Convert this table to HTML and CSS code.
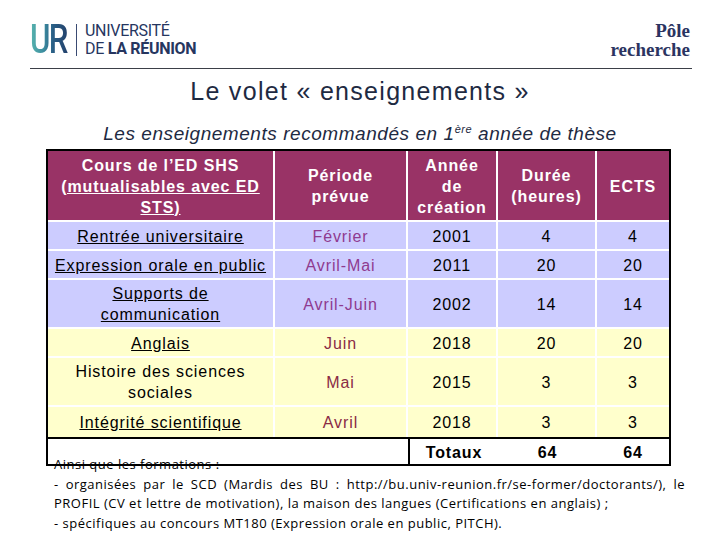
FILE: index.html
```html
<!DOCTYPE html>
<html lang="fr">
<head>
<meta charset="utf-8">
<title>Le volet « enseignements »</title>
<link rel="stylesheet" href="styles.css">
</head>
<body>
<header class="top">
  <div class="brand">
    <span class="urbox"><span class="ur">UR</span></span>
    <span class="sep"></span>
    <div class="uname">
      <div class="l1">UNIVERSITÉ</div>
      <div class="l2">DE <b>LA RÉUNION</b></div>
    </div>
  </div>
  <div class="pole">Pôle<br>recherche</div>
</header>
<div class="rule"></div>
<h1 class="title">Le volet « enseignements »</h1>
<h2 class="subtitle">Les enseignements recommandés en 1<sup>ère</sup> année de thèse</h2>
<div class="tablebox">
<table class="grid">
<colgroup><col class="c1"><col class="c2"><col class="c3"><col class="c4"><col class="c5"></colgroup>
<thead>
<tr class="head">
<th>Cours de l’ED SHS <u>(mutualisables avec ED STS)</u></th>
<th>Période<br>prévue</th>
<th>Année<br>de<br>création</th>
<th>Durée<br>(heures)</th>
<th>ECTS</th>
</tr>
</thead>
<tbody>
<tr class="blue single"><td><u>Rentrée universitaire</u></td><td class="per">Février</td><td>2001</td><td>4</td><td>4</td></tr>
<tr class="blue single"><td><u>Expression orale en public</u></td><td class="per">Avril-Mai</td><td>2011</td><td>20</td><td>20</td></tr>
<tr class="blue double"><td><u>Supports de<br>communication</u></td><td class="per">Avril-Juin</td><td>2002</td><td>14</td><td>14</td></tr>
<tr class="yellow single"><td><u>Anglais</u></td><td class="per">Juin</td><td>2018</td><td>20</td><td>20</td></tr>
<tr class="yellow double"><td>Histoire des sciences<br>sociales</td><td class="per">Mai</td><td>2015</td><td>3</td><td>3</td></tr>
<tr class="yellow last"><td><u>Intégrité scientifique</u></td><td class="per">Avril</td><td>2018</td><td>3</td><td>3</td></tr>
<tr class="tot"><td colspan="2"></td><td class="t3">Totaux</td><td>64</td><td>64</td></tr>
</tbody>
</table>
</div>
<div class="notes">
  <div class="nl">Ainsi que les formations :</div>
  <div class="nl just">- organisées par le SCD (Mardis des BU : http://bu.univ-reunion.fr/se-former/doctorants/), le</div>
  <div class="nl">PROFIL (CV et lettre de motivation), la maison des langues (Certifications en anglais) ;</div>
  <div class="nl">- spécifiques au concours MT180 (Expression orale en public, PITCH).</div>
</div>
</body>
</html>
```

FILE: styles.css
```css
html, body {
  margin: 0;
  padding: 0;
  background: #ffffff;
}
body {
  width: 720px;
  height: 540px;
  overflow: hidden;
  font-family: "Liberation Sans", Arial, sans-serif;
  color: #000;
}
.top {
  display: flex;
  justify-content: space-between;
  align-items: flex-start;
  height: 48px;
  padding: 20px 30px 0 30px;
}
.brand {
  display: flex;
  align-items: center;
  margin-top: 2px;
}
.urbox {
  display: inline-block;
  width: 40px;
  height: 34px;
  overflow: visible;
}
.ur {
  display: inline-block;
  font-family: Roboto, "Liberation Sans", sans-serif;
  font-weight: 500;
  font-size: 40px;
  line-height: 34px;
  letter-spacing: -2px;
  background: linear-gradient(90deg, #58b5ae 0%, #3d8ea0 35%, #2a5f86 60%, #23406b 100%);
  -webkit-background-clip: text;
  background-clip: text;
  color: transparent;
  padding-right: 2px;
  transform: scaleX(0.78);
  transform-origin: left center;
}
.sep {
  width: 1px;
  height: 32px;
  background: #3a4a72;
  margin: 0 8px 0 6px;
}
.uname {
  font-family: Roboto, "Liberation Sans", sans-serif;
  color: #26365f;
  font-size: 16px;
  line-height: 18px;
  letter-spacing: -0.3px;
}
.uname .l1 { font-weight: 400; }
.uname b { font-weight: 700; }
.pole {
  font-family: "Liberation Serif", "Times New Roman", serif;
  font-weight: 700;
  font-size: 19px;
  line-height: 19px;
  color: #2b3461;
  text-align: right;
  margin-top: 1px;
}
.rule {
  height: 1px;
  background: #3b3f48;
  margin: 0 28px 0 30px;
}
.title {
  margin: 8px 0 0 0;
  font-weight: 400;
  font-size: 25px;
  line-height: 29px;
  letter-spacing: 1.3px;
  text-align: center;
  color: #1e2a42;
}
.subtitle {
  margin: 17px 0 0 0;
  font-weight: 400;
  font-style: italic;
  font-size: 19px;
  line-height: 22px;
  letter-spacing: 0.55px;
  text-align: center;
  color: #1e2a42;
}
.subtitle sup {
  font-size: 11px;
  line-height: 0;
  vertical-align: 7px;
}
.tablebox {
  width: 621px;
  margin: 4px 0 0 46px;
  border: 2px solid #000;
}
.grid {
  width: 621px;
  table-layout: fixed;
  border-collapse: separate;
  border-spacing: 0;
  font-size: 16px;
  line-height: 21px;
  letter-spacing: 0.9px;
}
.c1 { width: 227px; }
.c2 { width: 133px; }
.c3 { width: 90px; }
.c4 { width: 99px; }
.c5 { width: 72px; }
.grid th, .grid td {
  padding: 1px 2px 0 2px;
  text-align: center;
  vertical-align: middle;
  border-right: 2px solid #fff;
  border-bottom: 2px solid #fff;
}
.grid th:last-child, .grid td:last-child { border-right: 0; }
.head { height: 71px; }
.head th {
  background: #993366;
  color: #fff;
  font-weight: 700;
}
.blue td { background: #ccccff; }
.yellow td { background: #ffffcc; }
.single { height: 29px; }
.double { height: 49px; }
.last { height: 30px; }
.last td { border-bottom: 0; }
.blue .per { color: #8f3a8f; }
.yellow .per { color: #8a2b45; }
.tot { height: 27px; }
.tot td {
  background: #fff;
  border-top: 2px solid #000;
  border-bottom: 0;
  border-right: 0;
  font-weight: 700;
}
.tot .t3 { border-left: 2px solid #000; }
.notes {
  position: relative;
  margin-top: -11px;
  padding: 0 35px 0 54px;
  font-family: "Open Sans", "Liberation Sans", sans-serif;
  font-size: 13px;
  line-height: 19.5px;
  letter-spacing: 0.5px;
  color: #000;
}
.nl { white-space: nowrap; }
.nl.just {
  text-align: justify;
  text-align-last: justify;
  white-space: normal;
}
```
